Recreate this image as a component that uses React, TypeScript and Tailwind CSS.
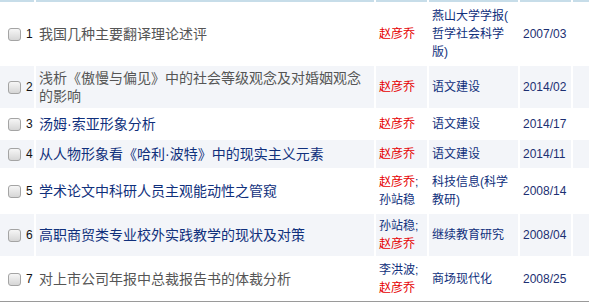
import React from 'react';

interface Paper {
  no: number;
  title: string;
  visited: boolean;
  authors: { name: string; self: boolean }[];
  journal: string;
  issue: string;
}

const me = { name: '赵彦乔', self: true };

const papers: Paper[] = [
  { no: 1, title: '我国几种主要翻译理论述评', visited: true, authors: [me], journal: '燕山大学学报(哲学社会科学版)', issue: '2007/03' },
  { no: 2, title: '浅析《傲慢与偏见》中的社会等级观念及对婚姻观念的影响', visited: true, authors: [me], journal: '语文建设', issue: '2014/02' },
  { no: 3, title: '汤姆·索亚形象分析', visited: false, authors: [me], journal: '语文建设', issue: '2014/17' },
  { no: 4, title: '从人物形象看《哈利·波特》中的现实主义元素', visited: false, authors: [me], journal: '语文建设', issue: '2014/11' },
  { no: 5, title: '学术论文中科研人员主观能动性之管窥', visited: false, authors: [me, { name: '孙站稳', self: false }], journal: '科技信息(科学教研)', issue: '2008/14' },
  { no: 6, title: '高职商贸类专业校外实践教学的现状及对策', visited: false, authors: [{ name: '孙站稳', self: false }, me], journal: '继续教育研究', issue: '2008/04' },
  { no: 7, title: '对上市公司年报中总裁报告书的体裁分析', visited: true, authors: [{ name: '李洪波', self: false }, me], journal: '商场现代化', issue: '2008/25' },
];

const cjk = "font-['Liberation_Sans','Noto_Sans_CJK_SC',sans-serif]";

const Checkbox = () => (
  <span className="inline-block w-[13px] h-[13px] rounded-[3px] border border-[#a4a4a4] bg-linear-to-b from-[#f6f6f6] to-[#d6d6d6] shrink-0" />
);

export default function App() {
  return (
    <div className={`w-[589px] h-[304px] bg-white overflow-hidden ${cjk}`}>
      <div className="grid grid-cols-[34px_338px_51px_89px_51px_1fr] gap-[2px]">
        {/* header strip (cut off) */}
        {[0, 1, 2, 3, 4, 5].map((i) => (
          <div key={i} className="h-[2px] bg-[#c7dde9]" />
        ))}

        {papers.map((p) => {
          const bg = p.no % 2 === 0 ? 'bg-[#f3f5f9]' : 'bg-white';
          return (
            <React.Fragment key={p.no}>
              <div className={`${bg} flex items-center pl-[8px] gap-[5px]`}>
                <Checkbox />
                <span className="text-[12px] text-[#111] leading-none">{p.no}</span>
              </div>
              <div
                className={`${bg} flex items-center px-[3px] py-[3px] min-h-[28px] text-[14px] leading-[18px] ${
                  p.visited ? 'text-[#555]' : 'text-[#10307c]'
                }`}
              >
                {p.title}
              </div>
              <div className={`${bg} flex flex-col justify-center px-[3px] py-[3px] text-[12px] leading-[18px]`}>
                {p.authors.map((a, i) => (
                  <span key={a.name} className={a.self ? 'text-[#e60000]' : 'text-[#10307c]'}>
                    {a.name}
                    {i < p.authors.length - 1 && <span className="text-[#10307c]">;</span>}
                  </span>
                ))}
              </div>
              <div
                className={`${bg} flex items-center px-[3px] py-[3px] text-[12px] leading-[18px] text-[#10307c] [line-break:anywhere]`}
              >
                {p.journal}
              </div>
              <div className={`${bg} flex items-center px-[3px] text-[12px] text-[#1c2f72]`}>{p.issue}</div>
              <div className={bg} />
            </React.Fragment>
          );
        })}
      </div>
      <div className="mt-[1px] h-px bg-[#9a9a9a]" />
    </div>
  );
}
